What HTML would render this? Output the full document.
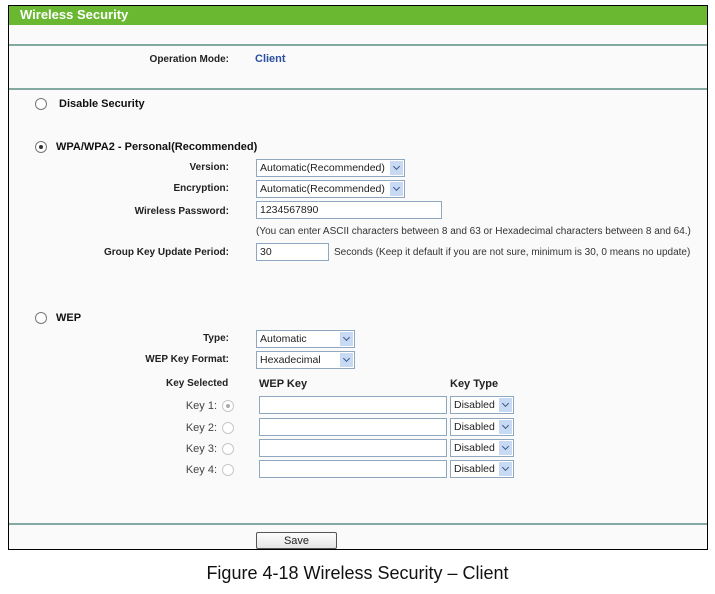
<!DOCTYPE html>
<html><head><meta charset="utf-8"><style>
*{margin:0;padding:0;box-sizing:border-box}
body{width:715px;height:594px;background:#fff;position:relative;font-family:"Liberation Sans",Arial,sans-serif;overflow:hidden}
.a{position:absolute;white-space:nowrap}
.frame{position:absolute;left:8px;top:5px;width:700px;height:545px;border:1px solid #000;background:#fafafa}
.hdr{position:absolute;left:9px;top:6px;width:698px;height:19px;background:#6ab832;color:#fff;font-weight:bold;font-size:13px;padding:1px 0 0 11px}
.line{position:absolute;left:9px;width:698px;height:2px;background:#83aaa0}
.lb{font-size:10px;font-weight:bold;color:#222;text-align:right;width:200px;left:29px}
.t{font-size:11px;color:#333}
.h{font-size:11px;font-weight:bold;color:#111}
.box{position:absolute;border:1px solid #8fa8c0;background:#fff;font-size:10.5px;color:#222;padding:2px 0 0 3px;height:18px;overflow:hidden}
.sel .btn{position:absolute;right:1px;top:1px;bottom:1px;width:14px;background:#c7d9f3;border-left:1px solid #fff}
.sel .btn:after{content:"";position:absolute;left:4px;top:3px;width:4px;height:4px;border-right:1.5px solid #3a5a8a;border-bottom:1.5px solid #3a5a8a;transform:rotate(45deg)}
.rad{position:absolute;width:12px;height:12px;border:1px solid #777;border-radius:50%;background:#fff}
.rad.on:after{content:"";position:absolute;left:3px;top:3px;width:4px;height:4px;border-radius:50%;background:#333}
.rad.dim{border-color:#c8c8c8}
.rad.dim.on:after{background:#aaa}
.kl{font-size:11px;color:#444;text-align:right;width:60px;left:157px}
</style></head><body>
<div class="frame"></div>
<div class="hdr">Wireless Security</div>
<div class="line" style="top:44px"></div>
<div class="line" style="top:88px"></div>
<div class="line" style="top:523px"></div>

<div class="a lb" style="top:54px">Operation Mode:</div>
<div class="a" style="left:255px;top:53px;font-size:11px;font-weight:bold;color:#2b4f9e">Client</div>

<div class="rad" style="left:35px;top:98px"></div>
<div class="a h" style="left:59px;top:98px">Disable Security</div>

<div class="rad on" style="left:35px;top:141px"></div>
<div class="a h" style="left:56px;top:141px">WPA/WPA2 - Personal(Recommended)</div>

<div class="a lb" style="top:162px">Version:</div>
<div class="box sel" style="left:256px;top:159px;width:149px">Automatic(Recommended)<div class="btn"></div></div>
<div class="a lb" style="top:183px">Encryption:</div>
<div class="box sel" style="left:256px;top:180px;width:149px">Automatic(Recommended)<div class="btn"></div></div>
<div class="a lb" style="top:206px">Wireless Password:</div>
<div class="box" style="left:256px;top:201px;width:186px">1234567890</div>
<div class="a t" style="left:256px;top:226px;font-size:10px">(You can enter ASCII characters between 8 and 63 or Hexadecimal characters between 8 and 64.)</div>
<div class="a lb" style="top:247px">Group Key Update Period:</div>
<div class="box" style="left:256px;top:243px;width:73px">30</div>
<div class="a t" style="left:334px;top:247px;font-size:10px">Seconds (Keep it default if you are not sure, minimum is 30, 0 means no update)</div>

<div class="rad" style="left:35px;top:312px"></div>
<div class="a h" style="left:56px;top:312px">WEP</div>

<div class="a lb" style="top:333px">Type:</div>
<div class="box sel" style="left:256px;top:330px;width:99px">Automatic<div class="btn"></div></div>
<div class="a lb" style="top:354px">WEP Key Format:</div>
<div class="box sel" style="left:256px;top:351px;width:99px">Hexadecimal<div class="btn"></div></div>

<div class="a" style="left:166px;top:378px;font-size:10px;font-weight:bold;color:#222">Key Selected</div>
<div class="a" style="left:259px;top:378px;font-size:11px;font-weight:bold;color:#222">WEP Key</div>
<div class="a" style="left:450px;top:378px;font-size:11px;font-weight:bold;color:#222">Key Type</div>

<div class="a kl" style="top:400px">Key 1:</div>
<div class="rad dim on" style="left:222px;top:400px"></div>
<div class="box" style="left:259px;top:396px;width:188px"></div>
<div class="box sel" style="left:450px;top:396px;width:64px">Disabled<div class="btn"></div></div>

<div class="a kl" style="top:422px">Key 2:</div>
<div class="rad dim" style="left:222px;top:422px"></div>
<div class="box" style="left:259px;top:418px;width:188px"></div>
<div class="box sel" style="left:450px;top:418px;width:64px">Disabled<div class="btn"></div></div>

<div class="a kl" style="top:443px">Key 3:</div>
<div class="rad dim" style="left:222px;top:443px"></div>
<div class="box" style="left:259px;top:439px;width:188px"></div>
<div class="box sel" style="left:450px;top:439px;width:64px">Disabled<div class="btn"></div></div>

<div class="a kl" style="top:464px">Key 4:</div>
<div class="rad dim" style="left:222px;top:464px"></div>
<div class="box" style="left:259px;top:460px;width:188px"></div>
<div class="box sel" style="left:450px;top:460px;width:64px">Disabled<div class="btn"></div></div>

<div class="a" style="left:256px;top:532px;width:81px;height:17px;border:1px solid #555;border-radius:2px;background:linear-gradient(#fdfdfd,#e4e4e4);font-size:11px;text-align:center;padding-top:2px;color:#222">Save</div>

<div class="a" style="left:0;width:715px;top:563px;text-align:center;font-size:18px;color:#111">Figure 4-18 Wireless Security – Client</div>
</body></html>
